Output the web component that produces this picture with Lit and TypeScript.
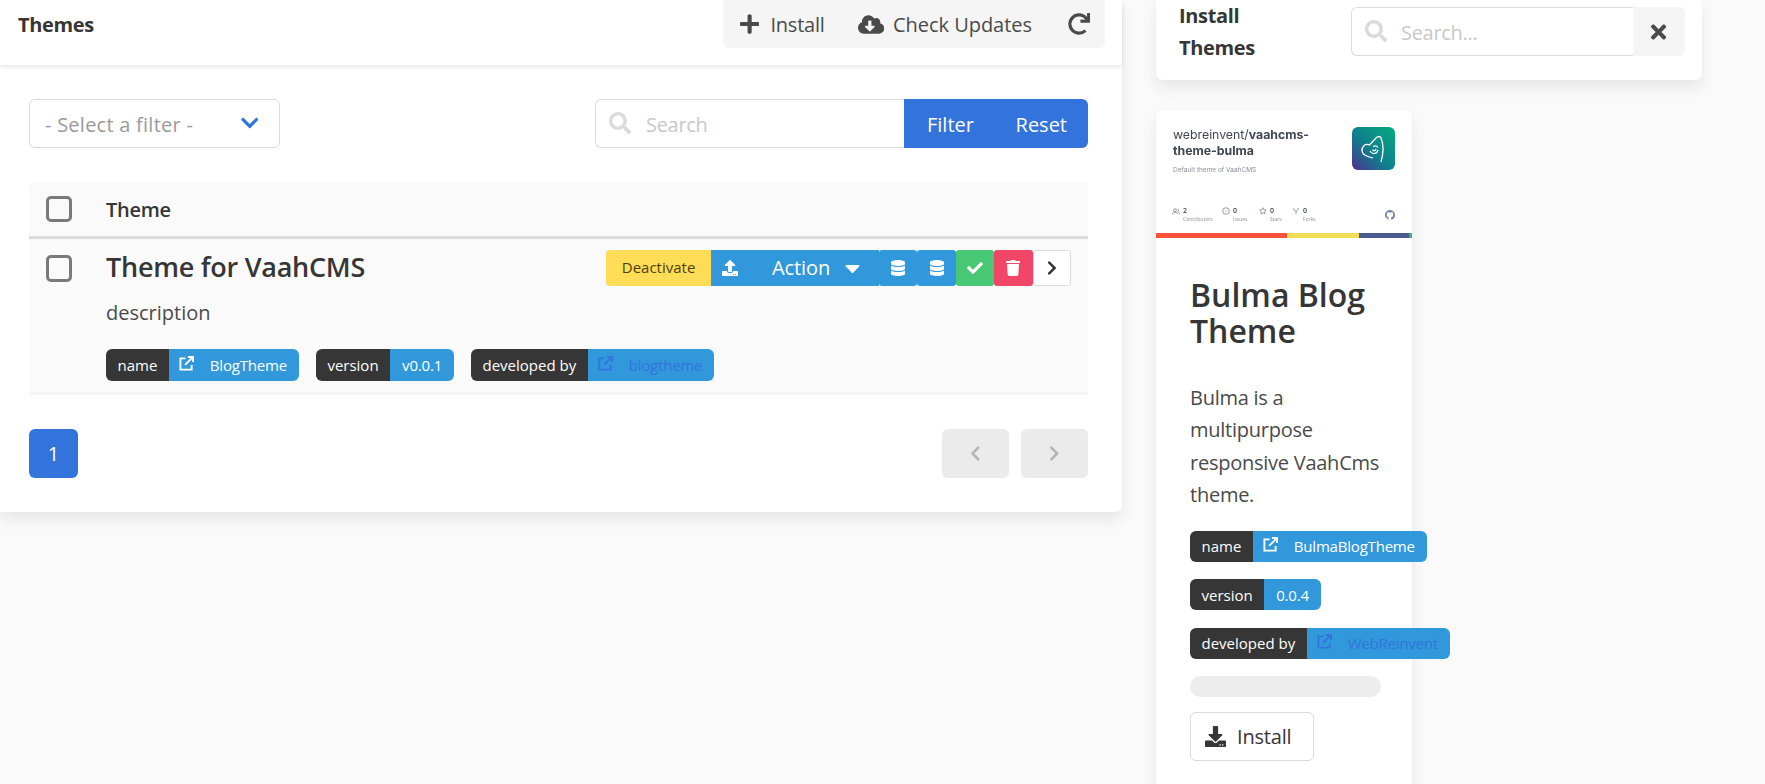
import { LitElement, css, html, svg } from "lit";
import { customElement } from "lit/decorators.js";

const ICONS: Record<string, [number, string]> = {
  plus: [448, "M416 208H272V64c0-17.67-14.33-32-32-32h-32c-17.67 0-32 14.33-32 32v144H32c-17.67 0-32 14.33-32 32v32c0 17.67 14.33 32 32 32h144v144c0 17.67 14.33 32 32 32h32c17.67 0 32-14.33 32-32V304h144c17.67 0 32-14.33 32-32v-32c0-17.67-14.33-32-32-32z"],
  cloud: [640, "M537.6 226.6c4.1-10.7 6.4-22.4 6.4-34.6 0-53-43-96-96-96-19.7 0-38.1 6-53.3 16.2C367 64.2 315.3 32 256 32c-88.4 0-160 71.6-160 160 0 2.7.1 5.4.2 8.1C40.2 219.8 0 273.2 0 336c0 79.5 64.5 144 144 144h368c70.7 0 128-57.3 128-128 0-61.9-44-113.6-102.4-125.4zm-132.9 88.7L299.3 420.7c-6.2 6.2-16.4 6.2-22.6 0L171.3 315.3c-10.1-10.1-2.9-27.3 11.3-27.3H248V176c0-8.8 7.2-16 16-16h48c8.8 0 16 7.2 16 16v112h65.4c14.2 0 21.4 17.2 11.3 27.3z"],
  redo: [512, "M500.33 0h-47.41a12 12 0 0 0-12 12.57l4 82.76A247.42 247.42 0 0 0 256 8C119.34 8 8 119.53 8 256.19 8.1 393.07 119.1 504 256 504a247.1 247.1 0 0 0 166.18-63.91 12 12 0 0 0 .48-17.43l-34-34a12 12 0 0 0-16.38-.55A176 176 0 1 1 402.1 157.8l-101.53-4.87a12 12 0 0 0-12.57 12v47.41a12 12 0 0 0 12 12h200.33a12 12 0 0 0 12-12V12a12 12 0 0 0-12-12z"],
  search: [512, "M505 442.7L405.3 343c-4.5-4.5-10.6-7-17-7H372c27.6-35.3 44-79.7 44-128C416 93.1 322.9 0 208 0S0 93.1 0 208s93.1 208 208 208c48.3 0 92.7-16.4 128-44v16.3c0 6.4 2.5 12.5 7 17l99.7 99.7c9.4 9.4 24.6 9.4 33.9 0l28.3-28.3c9.4-9.4 9.4-24.6.1-34zM208 336c-70.7 0-128-57.2-128-128 0-70.7 57.2-128 128-128 70.7 0 128 57.2 128 128 0 70.7-57.2 128-128 128z"],
  down: [448, "M207.029 381.476L12.686 187.132c-9.373-9.373-9.373-24.569 0-33.941l22.667-22.667c9.357-9.357 24.522-9.375 33.901-.04L224 284.505l154.745-154.021c9.379-9.335 24.544-9.317 33.901.04l22.667 22.667c9.373 9.373 9.373 24.569 0 33.941L240.971 381.476c-9.373 9.372-24.569 9.372-33.942 0z"],
  right: [320, "M285.476 272.971L91.132 467.314c-9.373 9.373-24.569 9.373-33.941 0l-22.667-22.667c-9.357-9.357-9.375-24.522-.04-33.901L188.505 256 34.484 101.255c-9.335-9.379-9.317-24.544.04-33.901l22.667-22.667c9.373-9.373 24.569-9.373 33.941 0L285.475 239.03c9.373 9.372 9.373 24.568.001 33.941z"],
  left: [320, "M34.52 239.03L228.87 44.69c9.37-9.37 24.57-9.37 33.94 0l22.67 22.67c9.36 9.36 9.37 24.52.04 33.9L131.49 256l154.02 154.75c9.34 9.38 9.32 24.54-.04 33.9l-22.67 22.67c-9.37 9.37-24.57 9.37-33.94 0L34.52 272.97c-9.37-9.37-9.37-24.57 0-33.94z"],
  upload: [512, "M296 384h-80c-13.3 0-24-10.7-24-24V192h-87.7c-17.8 0-26.7-21.5-14.1-34.1L242.3 5.7c7.5-7.5 19.8-7.5 27.3 0l152.2 152.2c12.6 12.6 3.7 34.1-14.1 34.1H320v168c0 13.3-10.7 24-24 24zm216-8v112c0 13.3-10.7 24-24 24H24c-13.3 0-24-10.7-24-24V376c0-13.3 10.7-24 24-24h136v8c0 30.9 25.1 56 56 56h80c30.9 0 56-25.1 56-56v-8h136c13.3 0 24 10.7 24 24zm-124 88c0-11-9-20-20-20s-20 9-20 20 9 20 20 20 20-9 20-20zm64 0c0-11-9-20-20-20s-20 9-20 20 9 20 20 20 20-9 20-20z"],
  download: [512, "M216 0h80c13.3 0 24 10.7 24 24v168h87.7c17.8 0 26.7 21.5 14.1 34.1L269.7 378.3c-7.5 7.5-19.8 7.5-27.3 0L90.1 226.1c-12.6-12.6-3.7-34.1 14.1-34.1H192V24c0-13.3 10.7-24 24-24zm296 376v112c0 13.3-10.7 24-24 24H24c-13.3 0-24-10.7-24-24V376c0-13.3 10.7-24 24-24h146.7l49 49c20.1 20.1 52.5 20.1 72.6 0l49-49H488c13.3 0 24 10.7 24 24zm-124 88c0-11-9-20-20-20s-20 9-20 20 9 20 20 20 20-9 20-20zm64 0c0-11-9-20-20-20s-20 9-20 20 9 20 20 20 20-9 20-20z"],
  database: [448, "M448 73.143v45.714C448 159.143 347.667 192 224 192S0 159.143 0 118.857V73.143C0 32.857 100.333 0 224 0s224 32.857 224 73.143zM448 176v102.857C448 319.143 347.667 352 224 352S0 319.143 0 278.857V176c48.125 33.143 136.208 48.572 224 48.572S399.874 209.143 448 176zm0 160v102.857C448 479.143 347.667 512 224 512S0 479.143 0 438.857V336c48.125 33.143 136.208 48.572 224 48.572S399.874 369.143 448 336z"],
  check: [512, "M173.898 439.404l-166.4-166.4c-9.997-9.997-9.997-26.206 0-36.204l36.203-36.204c9.997-9.998 26.207-9.998 36.204 0L192 312.69 432.095 72.596c9.997-9.997 26.207-9.997 36.204 0l36.203 36.204c9.997 9.997 9.997 26.206 0 36.204l-294.4 294.401c-9.998 9.997-26.207 9.997-36.204-.001z"],
  trash: [448, "M432 32H312l-9.4-18.7A24 24 0 0 0 281.1 0H166.8a23.72 23.72 0 0 0-21.4 13.3L136 32H16A16 16 0 0 0 0 48v32a16 16 0 0 0 16 16h416a16 16 0 0 0 16-16V48a16 16 0 0 0-16-16zM53.2 467a48 48 0 0 0 47.9 45h245.8a48 48 0 0 0 47.9-45L416 128H32z"],
  times: [352, "M242.72 256l100.07-100.07c12.28-12.28 12.28-32.19 0-44.48l-22.24-22.24c-12.28-12.28-32.19-12.28-44.48 0L176 189.28 75.93 89.21c-12.28-12.28-32.19-12.28-44.48 0L9.21 111.45c-12.28 12.28-12.28 32.19 0 44.48L109.28 256 9.21 356.07c-12.28 12.28-12.28 32.19 0 44.48l22.24 22.24c12.28 12.28 32.2 12.28 44.48 0L176 322.72l100.07 100.07c12.28 12.28 32.2 12.28 44.48 0l22.24-22.24c12.28-12.28 12.28-32.19 0-44.48L242.72 256z"],
  caret: [320, "M31.3 192h257.3c17.8 0 26.7 21.5 14.1 34.1L174.1 354.8c-7.8 7.8-20.5 7.8-28.3 0L17.2 226.1C4.6 213.5 13.5 192 31.3 192z"],
};

const GITHUB = "M8 0C3.58 0 0 3.58 0 8c0 3.54 2.29 6.53 5.47 7.59.4.07.55-.17.55-.38 0-.19-.01-.82-.01-1.49-2.01.37-2.53-.49-2.69-.94-.09-.23-.48-.94-.82-1.13-.28-.15-.68-.52-.01-.53.63-.01 1.08.58 1.23.82.72 1.21 1.87.87 2.33.66.07-.52.28-.87.51-1.07-1.78-.2-3.64-.89-3.64-3.95 0-.87.31-1.59.82-2.15-.08-.2-.36-1.02.08-2.12 0 0 .67-.21 2.2.82.64-.18 1.32-.27 2-.27.68 0 1.36.09 2 .27 1.53-1.04 2.2-.82 2.2-.82.44 1.1.16 1.92.08 2.12.51.56.82 1.27.82 2.15 0 3.07-1.87 3.75-3.65 3.95.29.25.54.73.54 1.48 0 1.07-.01 1.93-.01 2.2 0 .21.15.46.55.38A8.013 8.013 0 0016 8c0-4.42-3.58-8-8-8z";

// small outline glyphs of the repo stats row
const STAT_ICONS: Record<string, string> = {
  people: "M4 2.500a2 2 0 1 1 0 4 2 2 0 0 1 0-4zM.5 10c0-2 1.500-3 3.500-3s3.500 1 3.500 3M7.500 3c2 0 2 3 0 3.500M8.500 7c1.500.3 2 1.500 2 3",
  issue: "M5.500 1a4.500 4.500 0 1 1 0 9 4.500 4.500 0 0 1 0-9zM5.500 4.800v1.400",
  star: "M5.500 1l1.400 2.900 3.100.4-2.300 2.200.6 3.100-2.800-1.500-2.800 1.500.6-3.100L1 4.300l3.100-.4z",
  fork: "M2.500 1.500v2c0 1.500 3 1.500 3 3v3M8.500 1.500v2c0 1.500-3 1.500-3 3",
};

const icon = (name: string, size: number) => {
  const [w, d] = ICONS[name];
  return html`<svg class="icon" width=${(size * w) / 512} height=${size} viewBox="0 0 ${w} 512" fill="currentColor">${svg`<path d=${d}></path>`}</svg>`;
};

const linkIcon = html`<svg class="icon" width="15" height="15" viewBox="0 0 16 16" fill="none" stroke="currentColor" stroke-width="2">
  <path d="M7 2.500H1.500V14.500H13.500V9.500"></path><path d="M6.500 9.500L14 2"></path><path d="M9.500 1H15V6.500"></path>
</svg>`;

const tag = (label: string, value: string, mode: "" | "link" | "muted" = "") => html`
  <span class="tag">
    <span class="tag-key">${label}</span>
    <span class="tag-val ${mode}">
      ${mode ? linkIcon : ""}
      <span>${value}</span>
    </span>
  </span>
`;

const stat = (glyph: string, n: string, label: string) => html`
  <div class="stat">
    <svg class="stat-icon" width="8" height="8" viewBox="0 0 11 11" fill="none" stroke="currentColor"><path d=${STAT_ICONS[glyph]}></path></svg>
    <div class="stat-text"><b>${n}</b><span>${label}</span></div>
  </div>
`;

@customElement("app-root")
export class AppRoot extends LitElement {
  static styles = css`
    :host {
      display: block;
      width: 1765px;
      height: 784px;
      overflow: hidden;
      background: #fafafa;
      font-family: "Open Sans", "Noto Sans", sans-serif;
      font-size: 20px;
      color: #4a4a4a;
    }
    .icon { display: block; flex: none; }
    .layout {
      display: grid;
      grid-template-columns: 1122px 546px;
      column-gap: 34px;
      align-items: start;
    }

    .panel {
      background: #fff;
      border-radius: 0 0 6px 0;
      box-shadow: 0 8px 16px rgba(10, 10, 10, 0.08), 0 0 1px rgba(10, 10, 10, 0.08);
    }
    .panel-head {
      height: 65px;
      box-sizing: border-box;
      display: flex;
      justify-content: space-between;
      padding: 0 17px 0 18px;
      box-shadow: 0 2px 4px rgba(10, 10, 10, 0.1);
    }
    .panel-title {
      font-weight: 700;
      color: #363636;
      line-height: 50px;
      letter-spacing: -0.35px;
    }
    .toolbar {
      display: flex;
      height: 48px;
      background: #f5f5f5;
      border-radius: 0 0 6px 6px;
    }
    .tool {
      display: flex;
      align-items: center;
      gap: 11px;
      padding: 0 17px;
    }
    .tool.add { letter-spacing: -0.2px; padding-right: 16px; }
    .tool.updates { gap: 9px; padding-right: 18px; letter-spacing: -0.03px; }
    .tool.refresh { padding: 0 15px 0 18px; }
    .panel-body { padding: 34px 34px 34px 29px; }

    .filters {
      display: flex;
      justify-content: space-between;
      height: 49px;
    }
    .select {
      width: 251px;
      box-sizing: border-box;
      display: flex;
      align-items: center;
      justify-content: space-between;
      padding: 2px 21px 0 15px;
      border: 1px solid #dbdbdb;
      border-radius: 6px;
      color: #9a9a9a;
      letter-spacing: 0.25px;
    }
    .select .icon { color: #3273dc; margin-top: -3px; }
    .search-group { display: flex; }
    .input {
      display: flex;
      align-items: center;
      gap: 15px;
      box-sizing: border-box;
      border: 1px solid #dbdbdb;
      color: #c8c8c8;
      background: #fff;
      letter-spacing: -0.3px;
    }
    .input .icon { color: #dbdbdb; margin-top: -2px; }
    .input span { padding-top: 2px; }
    .filter-input {
      width: 309px;
      padding-left: 13px;
      border-right: 0;
      border-radius: 6px 0 0 6px;
    }
    .filter-actions {
      width: 184px;
      display: flex;
      align-items: center;
      justify-content: space-between;
      box-sizing: border-box;
      padding: 2px 21px 0 23px;
      background: #3273dc;
      color: #fff;
      border-radius: 0 6px 6px 0;
    }

    .table { margin-top: 34px; }
    .table-head {
      display: flex;
      align-items: center;
      height: 57px;
      box-sizing: border-box;
      background: #fafafa;
      border-bottom: 3px solid #dbdbdb;
      border-radius: 6px 6px 0 0;
      font-weight: 600;
      color: #363636;
      letter-spacing: -0.3px;
    }
    .check {
      width: 26px;
      height: 26px;
      box-sizing: border-box;
      border: 3px solid #7a7a7a;
      border-radius: 5px;
      margin: 0 34px 0 17px;
      flex: none;
    }
    .row {
      display: flex;
      height: 156px;
      box-sizing: border-box;
      background: #fafafa;
      border-bottom: 3px solid #f5f5f5;
      padding: 11px 17px 0 0;
    }
    .row .check { margin-top: 5px; height: 27px; }
    .row-main { flex: 1; min-width: 0; }
    .row-top { display: flex; justify-content: space-between; }
    .row-title {
      font-size: 27px;
      line-height: 34px;
      font-weight: 600;
      color: #363636;
      letter-spacing: -0.25px;
    }
    .actions { display: flex; height: 36px; }
    .act {
      display: flex;
      align-items: center;
      justify-content: center;
      box-sizing: border-box;
      width: 38.4px;
      height: 36px;
      border-radius: 3px;
      color: #fff;
      background: #3298dc;
      flex: none;
    }
    .act.deactivate {
      width: 105px;
      padding-bottom: 2px;
      background: #ffdd57;
      color: #4e3f0c;
      font-size: 15px;
      border-radius: 4px 0 0 4px;
    }
    .act.action {
      width: 168px;
      justify-content: flex-start;
      padding-left: 11px;
      border-radius: 0;
    }
    .act.action .label { margin: -2px 15px 0 34px; letter-spacing: -0.1px; }
    .act.ok { background: #48c774; }
    .act.del { background: #f14668; }
    .act.next {
      background: #fff;
      border: 1px solid #dbdbdb;
      color: #363636;
    }
    .desc {
      margin-top: 11px;
      line-height: 32px;
    }
    .tags { display: flex; gap: 17px; margin-top: 20px; }

    .tag {
      display: inline-flex;
      height: 32px;
      font-size: 15px;
      white-space: nowrap;
      border-radius: 6px;
      overflow: hidden;
      flex: none;
    }
    .tag-key {
      display: flex;
      align-items: center;
      padding: 0 11.500px;
      background: #363636;
      color: #fff;
    }
    .tag-val {
      display: flex;
      align-items: center;
      gap: 16px;
      padding: 0 12px;
      background: #3298dc;
      color: #fff;
      letter-spacing: -0.2px;
    }
    .tag-val.link, .tag-val.muted { padding-left: 10px; }
    .tag-val .icon { margin-top: -4px; }
    .tag-val.muted { color: #3273dc; }

    .pagination {
      display: flex;
      gap: 12px;
      margin-top: 34px;
    }
    .page {
      display: flex;
      align-items: center;
      justify-content: center;
      height: 49px;
      border-radius: 6px;
      width: 67px;
      background: #ebebeb;
      color: #b5b5b5;
    }
    .page.current {
      width: 49px;
      background: #3273dc;
      color: #fff;
      margin-right: auto;
    }

    .install-head {
      height: 80px;
      box-sizing: border-box;
      display: flex;
      justify-content: space-between;
      padding: 0 17px 0 23px;
      background: #fff;
      border-radius: 0 0 6px 6px;
      box-shadow: 0 8px 16px rgba(10, 10, 10, 0.08), 0 0 1px rgba(10, 10, 10, 0.08);
    }
    .install-title {
      width: 120px;
      font-weight: 700;
      color: #363636;
      line-height: 32.400px;
      letter-spacing: -0.35px;
    }
    .install-search { display: flex; margin-top: 7px; height: 49px; }
    .install-input {
      width: 282px;
      padding-left: 13px;
      gap: 14px;
      border-right: 0;
      border-radius: 6px 0 0 6px;
    }
    .close {
      width: 52px;
      display: flex;
      align-items: center;
      justify-content: center;
      background: #f5f5f5;
      color: #4a4a4a;
      border-radius: 0 6px 6px 0;
    }

    .card {
      width: 256px;
      margin-top: 30px;
      height: 720px;
      background: #fff;
      border-radius: 6px 6px 0 0;
      box-shadow: 0 8px 16px rgba(10, 10, 10, 0.08), 0 0 1px rgba(10, 10, 10, 0.08);
    }
    .thumb {
      position: relative;
      height: 128px;
      overflow: hidden;
      border-radius: 6px 6px 0 0;
      color: #3f4650;
    }
    .thumb-head {
      display: flex;
      justify-content: space-between;
      padding: 17px 17px 0 17px;
      filter: blur(0.3px);
    }
    .repo {
      width: 160px;
      font-family: Inter, "Open Sans", sans-serif;
      font-size: 12.300px;
      line-height: 16px;
      white-space: nowrap;
    }
    .repo b { font-weight: 700; }
    .repo-sub { font-size: 6.500px; color: #8b9098; margin-top: 7px; line-height: 9px; }
    .logo { flex: none; }
    .stats {
      position: absolute;
      left: 16px;
      top: 96px;
      display: grid;
      grid-template-columns: 50px 37px 33px auto;
      color: #737a85;
      filter: blur(0.3px);
    }
    .stat { display: flex; gap: 3px; }
    .stat-icon { flex: none; margin-top: 1px; }
    .stat-text { display: flex; flex-direction: column; }
    .stat-text b { font-size: 7px; line-height: 9px; font-weight: 600; color: #3f4650; }
    .stat-text span { font-size: 5px; line-height: 9px; color: #8a9099; }
    .gh { position: absolute; right: 17px; top: 100px; color: #7b84a0; }
    .stripes {
      position: absolute;
      left: 0;
      right: 0;
      bottom: 0;
      height: 5px;
      display: flex;
    }
    .stripes i { display: block; height: 100%; }
    .card-body { padding: 39px 0 0 34px; }
    .card-title {
      font-size: 32px;
      line-height: 36px;
      font-weight: 600;
      color: #363636;
      width: 200px;
    }
    .card-desc {
      margin-top: 33px;
      line-height: 32.400px;
      width: 200px;
      letter-spacing: -0.25px;
    }
    .card-tags {
      display: flex;
      flex-direction: column;
      align-items: flex-start;
      gap: 17.500px;
      margin-top: 19px;
    }
    .card-tags .tag { height: 31px; }
    .progress {
      width: 191px;
      height: 21px;
      border-radius: 11px;
      background: #ededed;
      margin-top: 17px;
    }
    .install-btn {
      display: flex;
      align-items: center;
      gap: 11px;
      width: 124px;
      height: 49px;
      box-sizing: border-box;
      padding-left: 14px;
      margin-top: 15px;
      background: #fff;
      border: 1px solid #dbdbdb;
      border-radius: 6px;
      color: #363636;
      letter-spacing: -0.2px;
    }
  `;

  render() {
    return html`
      <div class="layout">
        <section class="panel">
          <header class="panel-head">
            <div class="panel-title">Themes</div>
            <div class="toolbar">
              <div class="tool add">${icon("plus", 22)}<span>Install</span></div>
              <div class="tool updates">${icon("cloud", 21)}<span>Check Updates</span></div>
              <div class="tool refresh">${icon("redo", 22)}</div>
            </div>
          </header>
          <div class="panel-body">
            <div class="filters">
              <div class="select"><span>- Select a filter -</span>${icon("down", 20)}</div>
              <div class="search-group">
                <div class="input filter-input">${icon("search", 22)}<span>Search</span></div>
                <div class="filter-actions"><span>Filter</span><span>Reset</span></div>
              </div>
            </div>
            <div class="table">
              <div class="table-head"><span class="check"></span><span>Theme</span></div>
              <div class="row">
                <span class="check"></span>
                <div class="row-main">
                  <div class="row-top">
                    <div class="row-title">Theme for VaahCMS</div>
                    <div class="actions">
                      <div class="act deactivate">Deactivate</div>
                      <div class="act action">
                        ${icon("upload", 16)}
                        <span class="label">Action</span>
                        ${icon("caret", 24)}
                      </div>
                      <div class="act">${icon("database", 16)}</div>
                      <div class="act">${icon("database", 16)}</div>
                      <div class="act ok">${icon("check", 16)}</div>
                      <div class="act del">${icon("trash", 16)}</div>
                      <div class="act next">${icon("right", 16)}</div>
                    </div>
                  </div>
                  <div class="desc">description</div>
                  <div class="tags">
                    ${tag("name", "BlogTheme", "link")}
                    ${tag("version", "v0.0.1")}
                    ${tag("developed by", "blogtheme", "muted")}
                  </div>
                </div>
              </div>
            </div>
            <div class="pagination">
              <div class="page current">1</div>
              <div class="page">${icon("left", 17)}</div>
              <div class="page">${icon("right", 17)}</div>
            </div>
          </div>
        </section>

        <aside>
          <div class="install-head">
            <div class="install-title">Install Themes</div>
            <div class="install-search">
              <div class="input install-input">${icon("search", 22)}<span>Search...</span></div>
              <div class="close">${icon("times", 22)}</div>
            </div>
          </div>
          <article class="card">
            <div class="thumb">
              <div class="thumb-head">
                <div class="repo">
                  <div>webreinvent/<b>vaahcms-</b></div>
                  <div><b>theme-bulma</b></div>
                  <div class="repo-sub">Default theme of VaahCMS</div>
                </div>
                <svg class="logo" width="43" height="43" viewBox="0 0 43 43">
                  <defs>
                    <linearGradient id="lg" x1="1" y1="0" x2="0" y2="1">
                      <stop offset="0" stop-color="#05ac7f"></stop>
                      <stop offset="0.55" stop-color="#0f7f8d"></stop>
                      <stop offset="1" stop-color="#4f2f8f"></stop>
                    </linearGradient>
                  </defs>
                  <rect width="43" height="43" rx="6" fill="url(#lg)"></rect>
                  <path d="M29 35C31 28 32 18 29 11C28 9 26 9 24 11L17.500 18C13 16 9.500 20 10 24C10.500 28 14 29 21 31" fill="none" stroke="#fff" stroke-width="1.300"></path>
                  <path d="M18 24C20 28 25 27 26 23M20.500 22.500C21.500 24.500 23.500 24 24 22M21 19.500C23 18.500 25 19 26 20.500" fill="none" stroke="#fff" stroke-width="1.200"></path>
                </svg>
              </div>
              <div class="stats">
                ${stat("people", "2", "Contributors")}
                ${stat("issue", "0", "Issues")}
                ${stat("star", "0", "Stars")}
                ${stat("fork", "0", "Forks")}
              </div>
              <svg class="gh" width="10" height="10" viewBox="0 0 16 16" fill="currentColor"><path d=${GITHUB}></path></svg>
              <div class="stripes">
                <i style="width:131px;background:#f8533a"></i>
                <i style="width:72px;background:#f2dd56"></i>
                <i style="width:50px;background:#4a5a8f"></i>
                <i style="width:3px;background:#3fb37f"></i>
              </div>
            </div>
            <div class="card-body">
              <div class="card-title">Bulma Blog Theme</div>
              <div class="card-desc">Bulma is a multipurpose responsive VaahCms theme.</div>
              <div class="card-tags">
                ${tag("name", "BulmaBlogTheme", "link")}
                ${tag("version", "0.0.4")}
                ${tag("developed by", "WebReinvent", "muted")}
              </div>
              <div class="progress"></div>
              <div class="install-btn">${icon("download", 21)}<span>Install</span></div>
            </div>
          </article>
        </aside>
      </div>
    `;
  }
}
